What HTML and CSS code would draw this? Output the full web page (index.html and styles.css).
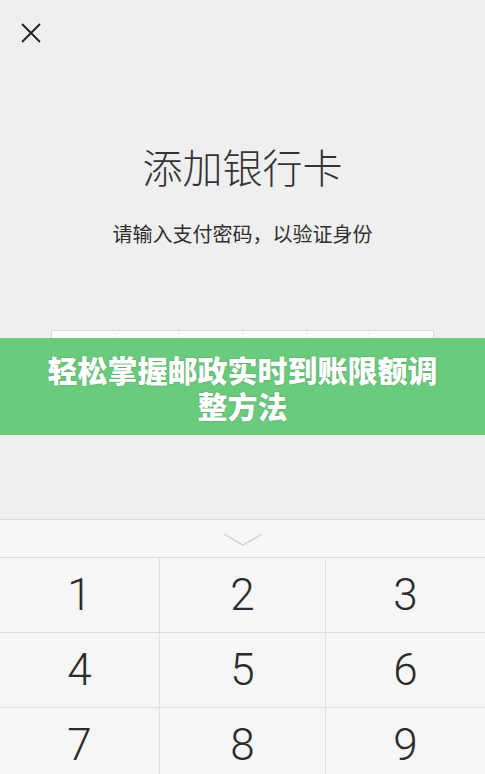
FILE: index.html
```html
<!DOCTYPE html>
<html>
  <head>
    <meta charset="utf-8">
    <title>添加银行卡</title>
    <link rel="stylesheet" href="styles.css">
  </head>
  <body>
    <div class="top-bar">
      <button class="close-btn" aria-label="关闭">
        <svg width="20" height="20" viewBox="0 0 20 20">
          <path d="M1 1 L19 19 M19 1 L1 19" stroke="#1f1f1f" stroke-width="1.8" fill="none" />
        </svg>
      </button>
    </div>

    <div class="pay-panel">
      <h1 class="pay-title">添加银行卡</h1>
      <p class="pay-tip">请输入支付密码，以验证身份</p>
      <div class="pwd-box">
        <span class="pwd-cell"></span>
        <span class="pwd-cell"></span>
        <span class="pwd-cell"></span>
        <span class="pwd-cell"></span>
        <span class="pwd-cell"></span>
        <span class="pwd-cell"></span>
      </div>
    </div>

    <div class="banner">轻松掌握邮政实时到账限额调整方法</div>

    <div class="keyboard">
      <div class="kb-toggle">
        <svg width="40" height="14" viewBox="0 0 40 14">
          <path d="M1 1 L20 12 L39 1" stroke="#cfcfcf" stroke-width="1.2" fill="none" />
        </svg>
      </div>
      <div class="kb-grid">
        <div class="key">1</div>
        <div class="key">2</div>
        <div class="key">3</div>
        <div class="key">4</div>
        <div class="key">5</div>
        <div class="key">6</div>
        <div class="key">7</div>
        <div class="key">8</div>
        <div class="key">9</div>
      </div>
    </div>
  </body>
</html>
```

FILE: styles.css
```css
html,
body {
  margin: 0;
  padding: 0;
}
body {
  position: relative;
  height: 774px;
  overflow: hidden;
  background: #efefef;
  font-family: "Noto Sans CJK SC", "Noto Sans", sans-serif;
  color: #333;
}
.top-bar {
  padding: 23px 0 0 21px;
  height: 20px;
}
.close-btn {
  display: block;
  padding: 0;
  border: none;
  background: none;
  width: 20px;
  height: 20px;
}
.close-btn svg {
  display: block;
}
.pay-panel {
  text-align: center;
}
.pay-title {
  margin: 99px 0 0;
  font-size: 40px;
  line-height: 48px;
  font-weight: 300;
  color: #353535;
}
.pay-tip {
  margin: 30px 0 0;
  font-size: 20px;
  line-height: 28px;
  color: #2f2f2f;
}
.pwd-box {
  display: flex;
  width: 381px;
  height: 64px;
  margin: 82px auto 0;
  border: 1px solid #d9d9d9;
  background: #fff;
}
.pwd-cell {
  flex: 1;
  border-left: 1px solid #efefef;
}
.pwd-cell:first-child {
  border-left: none;
}
.banner {
  position: absolute;
  top: 338px;
  left: 0;
  right: 0;
  height: 97px;
  padding: 13px 40px 0;
  box-sizing: border-box;
  background: rgba(98, 200, 118, 0.95);
  color: #fff;
  font-size: 30px;
  line-height: 36px;
  font-weight: 900;
  text-align: center;
  text-shadow: 0 0 2px rgba(0, 0, 0, 0.25);
}
.keyboard {
  margin-top: 123px;
  border-top: 1px solid #dcdcdc;
  background: #f6f6f6;
}
.kb-toggle {
  height: 37px;
  display: flex;
  justify-content: center;
  align-items: center;
  padding-top: 2px;
  box-sizing: border-box;
}
.kb-grid {
  display: grid;
  grid-template-columns: 160px 166px 1fr;
  border-top: 1px solid #dcdcdc;
}
.key {
  height: 74px;
  border-bottom: 1px solid #dcdcdc;
  border-right: 1px solid #e0e0e0;
  display: flex;
  justify-content: center;
  align-items: center;
  font-family: Roboto, "Liberation Sans", sans-serif;
  font-weight: 300;
  font-size: 44px;
  color: #2b2b2b;
}
.key:nth-child(3n) {
  border-right: none;
}
```
